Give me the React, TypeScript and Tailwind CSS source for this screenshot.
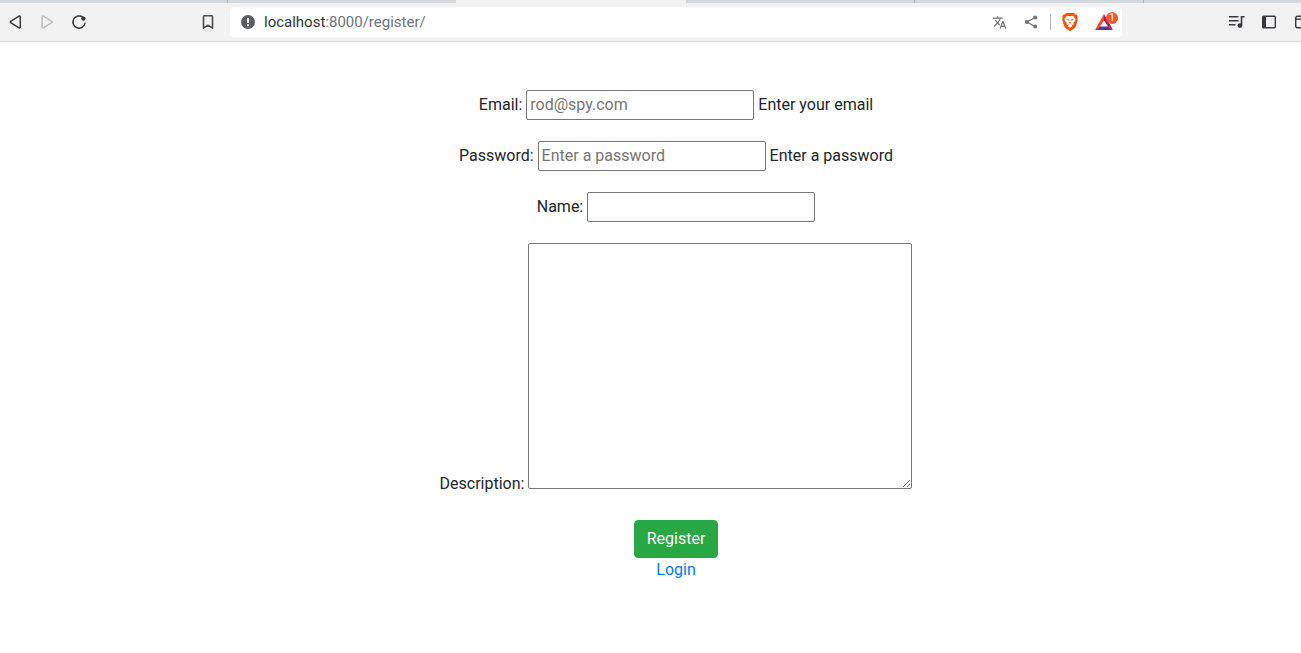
import type { InputHTMLAttributes, ReactNode } from "react";

function IconButton({ label, children }: { label: string; children: ReactNode }) {
  return (
    <button type="button" aria-label={label} className="flex size-8 shrink-0 items-center justify-center">
      {children}
    </button>
  );
}

function TabStrip() {
  return (
    <div className="flex h-[3px] overflow-hidden bg-[#d3d8dc]">
      <div className="w-[228px] shrink-0 border-r border-[#b3b8bd]" />
      <div className="w-[228px] shrink-0" />
      <div className="w-[230px] shrink-0 bg-[#f2f2f2]" />
      <div className="w-[229px] shrink-0 border-r border-[#b3b8bd]" />
      <div className="w-[229px] shrink-0 border-r border-[#b3b8bd]" />
    </div>
  );
}

function AddressBar() {
  return (
    <div className="flex h-[30px] min-w-0 flex-1 items-center rounded bg-white pl-[11px]">
      <svg className="size-[14px] shrink-0" viewBox="0 0 14 14" aria-hidden="true">
        <circle cx="7" cy="7" r="7" fill="#5a5e63" />
        <path d="M6 3h2v5H6zM6 9.3h2v1.9H6z" fill="#fff" />
      </svg>
      <div className="ml-[9px] min-w-0 flex-1 truncate text-[15px] leading-6 text-[#6f7377]">
        <span className="text-[#303438]">localhost</span>:8000/register/
      </div>
      <IconButton label="Translate">
        <svg className="size-[15px]" viewBox="0 0 24 24" fill="#707376" aria-hidden="true">
          <path d="M12.87 15.07l-2.54-2.51.03-.03A17.52 17.52 0 0 0 14.07 6H17V4h-7V2H8v2H1v2h11.17C11.5 7.92 10.44 9.75 9 11.35 8.07 10.32 7.3 9.19 6.69 8h-2c.73 1.63 1.73 3.17 2.98 4.56l-5.09 5.02L4 19l5-5 3.11 3.11.76-2.04zM18.5 10h-2L12 22h2l1.12-3h4.75L21 22h2l-4.5-12zm-2.62 7l1.62-4.33L19.12 17h-3.24z" />
        </svg>
      </IconButton>
      <IconButton label="Share">
        <svg className="size-4" viewBox="0 0 16 16" aria-hidden="true">
          <path d="M12.2 3.5L3.8 8l8.4 4.5" fill="none" stroke="#707376" strokeWidth="1.4" />
          <g fill="#707376">
            <circle cx="12.2" cy="3.6" r="2" />
            <circle cx="3.8" cy="8" r="2.1" />
            <circle cx="12.2" cy="12.4" r="2" />
          </g>
        </svg>
      </IconButton>
      <div className="ml-[3px] h-4 w-px shrink-0 bg-[#b4b6b8]" />
      <div className="ml-[3px] flex shrink-0">
        <IconButton label="Brave Shields">
          <svg className="h-[18px] w-4" viewBox="0 0 16 18" aria-hidden="true">
            <path d="M4.3 0h7.4l1.4 1.5 1.4-.1 1.3 2-.5 1.4.5 1.6-1.8 6.4c-.3 1.1-.9 1.8-1.8 2.4L8.7 17.7a1.3 1.3 0 0 1-1.4 0l-3.5-2.5c-.9-.6-1.5-1.3-1.8-2.4L.2 6.4l.5-1.6-.5-1.4 1.3-2 1.4.1z" fill="#fb4f0a" />
            <path d="M5 2.8l3 .5 3-.5 2.6 3.2-.6 2-1.8 2.2.4 1.1-1 .8-1.1-.7-.2.6 1.2 1.1L8 14.8 5.5 13.1l1.2-1.1-.2-.6-1.1.7-1-.8.4-1.1L3 8l-.6-2z" fill="#fff" />
            <path d="M4 5.8l3 .7-.6 1.4zM12 5.8l-3 .7.6 1.4zM6.6 9.3h2.8L8 11z" fill="#fb4f0a" />
          </svg>
        </IconButton>
        <button type="button" aria-label="Brave Rewards" className="relative flex h-8 w-9 items-center justify-center">
          <svg className="h-4 w-[18px]" viewBox="0 0 18 16" aria-hidden="true">
            <path d="M9 0L0 16l5-3.4 4-6.4z" fill="#ff4724" />
            <path d="M9 0l9 16-5-3.4-4-6.4z" fill="#9e1f63" />
            <path d="M0 16h18l-5-3.6H5z" fill="#662d91" />
          </svg>
          <span className="absolute top-[6px] right-1 flex size-3 items-center justify-center rounded-full bg-[#fb542b] text-[10px] leading-3 text-white">
            1
          </span>
        </button>
      </div>
    </div>
  );
}

function Toolbar() {
  return (
    <div className="flex h-[39px] items-center overflow-hidden border-b border-[#d5d7d9] bg-[#f2f2f2]">
      <div className="flex w-[230px] shrink-0 items-center justify-between pr-[6px]">
        <div className="-ml-px flex">
          <IconButton label="Back">
            <svg className="size-4" viewBox="0 0 16 16" fill="none" stroke="#37393c" strokeWidth="1.5" strokeLinejoin="round" aria-hidden="true">
              <path d="M12.1 2.1a.8.8 0 0 1 1.2.7v10.4a.8.8 0 0 1-1.2.7L3.6 8.6a.7.7 0 0 1 0-1.2z" />
            </svg>
          </IconButton>
          <IconButton label="Forward">
            <svg className="size-4" viewBox="0 0 16 16" fill="none" stroke="#bdbebf" strokeWidth="1.5" strokeLinejoin="round" aria-hidden="true">
              <path d="M4.3 2.1a.8.8 0 0 0-1.2.7v10.4a.8.8 0 0 0 1.2.7l8.5-5.3a.7.7 0 0 0 0-1.2z" />
            </svg>
          </IconButton>
          <IconButton label="Reload">
            <svg className="size-4" viewBox="0 0 16 16" aria-hidden="true">
              <path d="M14 9.3A6.1 6.1 0 1 1 11.8 3.2" fill="none" stroke="#37393c" strokeWidth="1.5" strokeLinecap="round" />
              <circle cx="12.4" cy="4.6" r="2.2" fill="#37393c" />
            </svg>
          </IconButton>
        </div>
        <IconButton label="Bookmark this tab">
          <svg className="size-4" viewBox="0 0 16 16" fill="none" stroke="#4a4c4f" strokeWidth="1.6" strokeLinejoin="round" aria-hidden="true">
            <path d="M4.2 1.8h7.6a.7.7 0 0 1 .7.7v11.7L8 11.2l-4.5 3V2.5a.7.7 0 0 1 .7-.7z" />
          </svg>
        </IconButton>
      </div>
      <AddressBar />
      <div className="flex w-[179px] shrink-0 overflow-hidden pl-[99px]">
        <IconButton label="Media controls">
          <svg className="size-4" viewBox="0 0 16 16" aria-hidden="true">
            <path d="M0 2.7h9.5M0 6.7h9.5M0 10.7h6.5M15.6 2.7h-3.1v8.6" fill="none" stroke="#37393c" strokeWidth="1.6" />
            <circle cx="10.9" cy="11.6" r="2.4" fill="#37393c" />
          </svg>
        </IconButton>
        <IconButton label="Sidebar">
          <svg className="size-4" viewBox="0 0 16 16" aria-hidden="true">
            <rect x="1.7" y="2.2" width="12.6" height="11.6" rx="1" fill="none" stroke="#37393c" strokeWidth="1.4" />
            <path d="M1.7 2.2H5v11.6H1.7z" fill="#37393c" />
          </svg>
        </IconButton>
        <IconButton label="Wallet">
          <svg className="size-4" viewBox="0 0 16 16" fill="none" stroke="#37393c" strokeWidth="1.4" aria-hidden="true">
            <rect x="2.7" y="2.2" width="12" height="11.6" rx="2" />
            <path d="M3 5.2h12" />
          </svg>
        </IconButton>
      </div>
    </div>
  );
}

type FieldProps = InputHTMLAttributes<HTMLInputElement> & { id: string; label: string; help?: string };

function Field({ id, label, help, ...input }: FieldProps) {
  return (
    <div className="flex items-center justify-center gap-1">
      <label htmlFor={id}>{label}</label>
      <input
        id={id}
        className="h-[30px] w-[228px] rounded-xs border border-[#767676] bg-white px-[3px] pb-[2px] placeholder:text-[#757575]"
        {...input}
      />
      {help && <span>{help}</span>}
    </div>
  );
}

export default function App() {
  return (
    <div className="min-h-screen bg-white font-['Roboto',sans-serif] text-base leading-6 text-[#212529]">
      <header>
        <TabStrip />
        <Toolbar />
      </header>
      <main className="pt-12 pl-[51px]">
        <form className="flex flex-col gap-[21px]" onSubmit={(e) => e.preventDefault()}>
          <Field id="email" label="Email:" help="Enter your email" type="email" placeholder="rod@spy.com" />
          <Field id="password" label="Password:" help="Enter a password" type="password" placeholder="Enter a password" />
          <Field id="name" label="Name:" type="text" />
          <div className="flex items-end justify-center gap-1">
            <label htmlFor="description">Description:</label>
            <textarea
              id="description"
              className="mb-[7px] h-[246px] w-[384px] resize rounded-xs border border-[#767676] bg-white p-[3px]"
            />
          </div>
          <div className="mt-[3px] flex flex-col items-center">
            <button
              type="submit"
              className="rounded border border-[#28a745] bg-[#28a745] px-3 py-[6px] text-white"
            >
              Register
            </button>
            <a href="/login/" className="text-[#007bff]">
              Login
            </a>
          </div>
        </form>
      </main>
    </div>
  );
}
